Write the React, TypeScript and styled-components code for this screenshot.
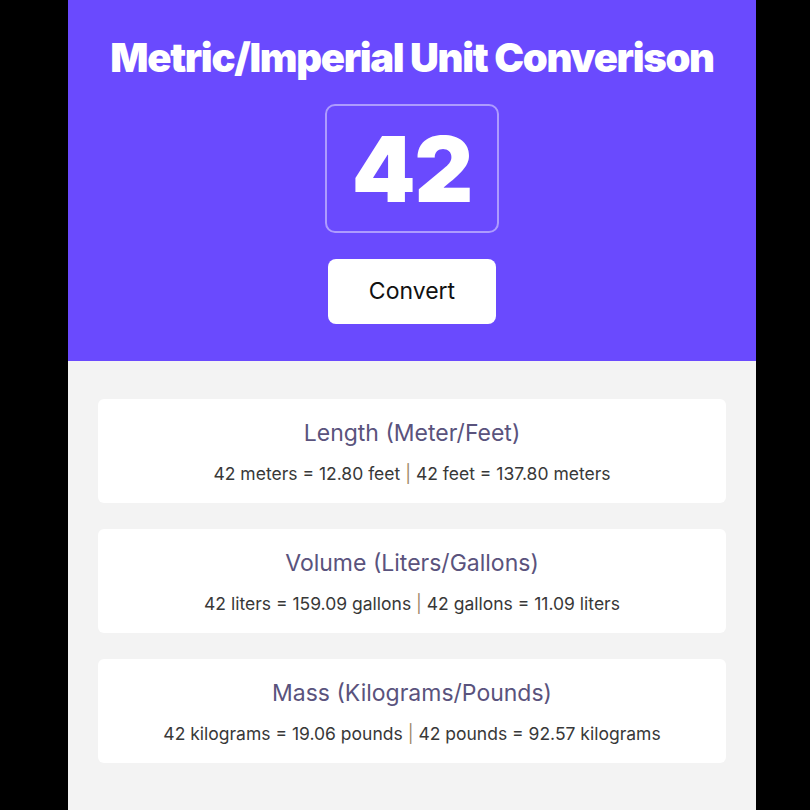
import React from "react";
import styled, { createGlobalStyle } from "styled-components";

const Global = createGlobalStyle`
  html, body { margin: 0; padding: 0; background: #000; }
  body { font-family: Inter, "Noto Sans", sans-serif; }
`;

const Page = styled.div`
  padding-left: 68px;
  min-height: 810px;
  display: flex;
`;

const Container = styled.main`
  width: 688px;
  display: flex;
  flex-direction: column;
`;

const Header = styled.header`
  background: #6a4afe;
  height: 361px;
  box-sizing: border-box;
  padding-top: 34px;
  display: flex;
  flex-direction: column;
  align-items: center;
`;

const Title = styled.h1`
  margin: 0;
  color: #fff;
  font-size: 40px;
  font-weight: 900;
  letter-spacing: -1.3px;
  line-height: 48px;
`;

const NumberBox = styled.div`
  margin-top: 22px;
  width: 174px;
  height: 129px;
  box-sizing: border-box;
  border: 2px solid rgba(255, 255, 255, 0.45);
  border-radius: 10px;
  display: flex;
  align-items: center;
  justify-content: center;
  color: #fff;
  font-size: 91px;
  font-weight: 900;
  letter-spacing: -1px;
`;

const ConvertButton = styled.button`
  margin-top: 26px;
  width: 168px;
  height: 65px;
  border: none;
  border-radius: 8px;
  background: #fff;
  color: #111;
  font-family: Inter, sans-serif;
  font-size: 23px;
  font-weight: 400;
  padding: 0 0 2px;
`;

const Results = styled.section`
  flex: 1;
  background: #f3f3f3;
  padding: 38px 30px 40px;
  display: flex;
  flex-direction: column;
  gap: 26px;
`;

const Card = styled.div`
  background: #fff;
  border-radius: 6px;
  height: 104px;
  box-sizing: border-box;
  padding-top: 19px;
  display: flex;
  flex-direction: column;
  align-items: center;
`;

const CardTitle = styled.h2`
  margin: 0;
  font-size: 23px;
  font-weight: 400;
  color: #5a537d;
  line-height: 30px;
`;

const CardText = styled.p`
  margin: 14px 0 0;
  font-size: 17.5px;
  color: #383838;
  line-height: 24px;
`;

const Sep = styled.span`
  color: #a08a6a;
`;

const rows = [
  { title: "Length (Meter/Feet)", a: "42 meters = 12.80 feet", b: "42 feet = 137.80 meters" },
  { title: "Volume (Liters/Gallons)", a: "42 liters = 159.09 gallons", b: "42 gallons = 11.09 liters" },
  { title: "Mass (Kilograms/Pounds)", a: "42 kilograms = 19.06 pounds", b: "42 pounds = 92.57 kilograms" },
];

export default function App() {
  return (
    <>
      <Global />
      <Page>
        <Container>
          <Header>
            <Title>Metric/Imperial Unit Converison</Title>
            <NumberBox>42</NumberBox>
            <ConvertButton>Convert</ConvertButton>
          </Header>
          <Results>
            {rows.map((r) => (
              <Card key={r.title}>
                <CardTitle>{r.title}</CardTitle>
                <CardText>
                  {r.a} <Sep>|</Sep> {r.b}
                </CardText>
              </Card>
            ))}
          </Results>
        </Container>
      </Page>
    </>
  );
}
